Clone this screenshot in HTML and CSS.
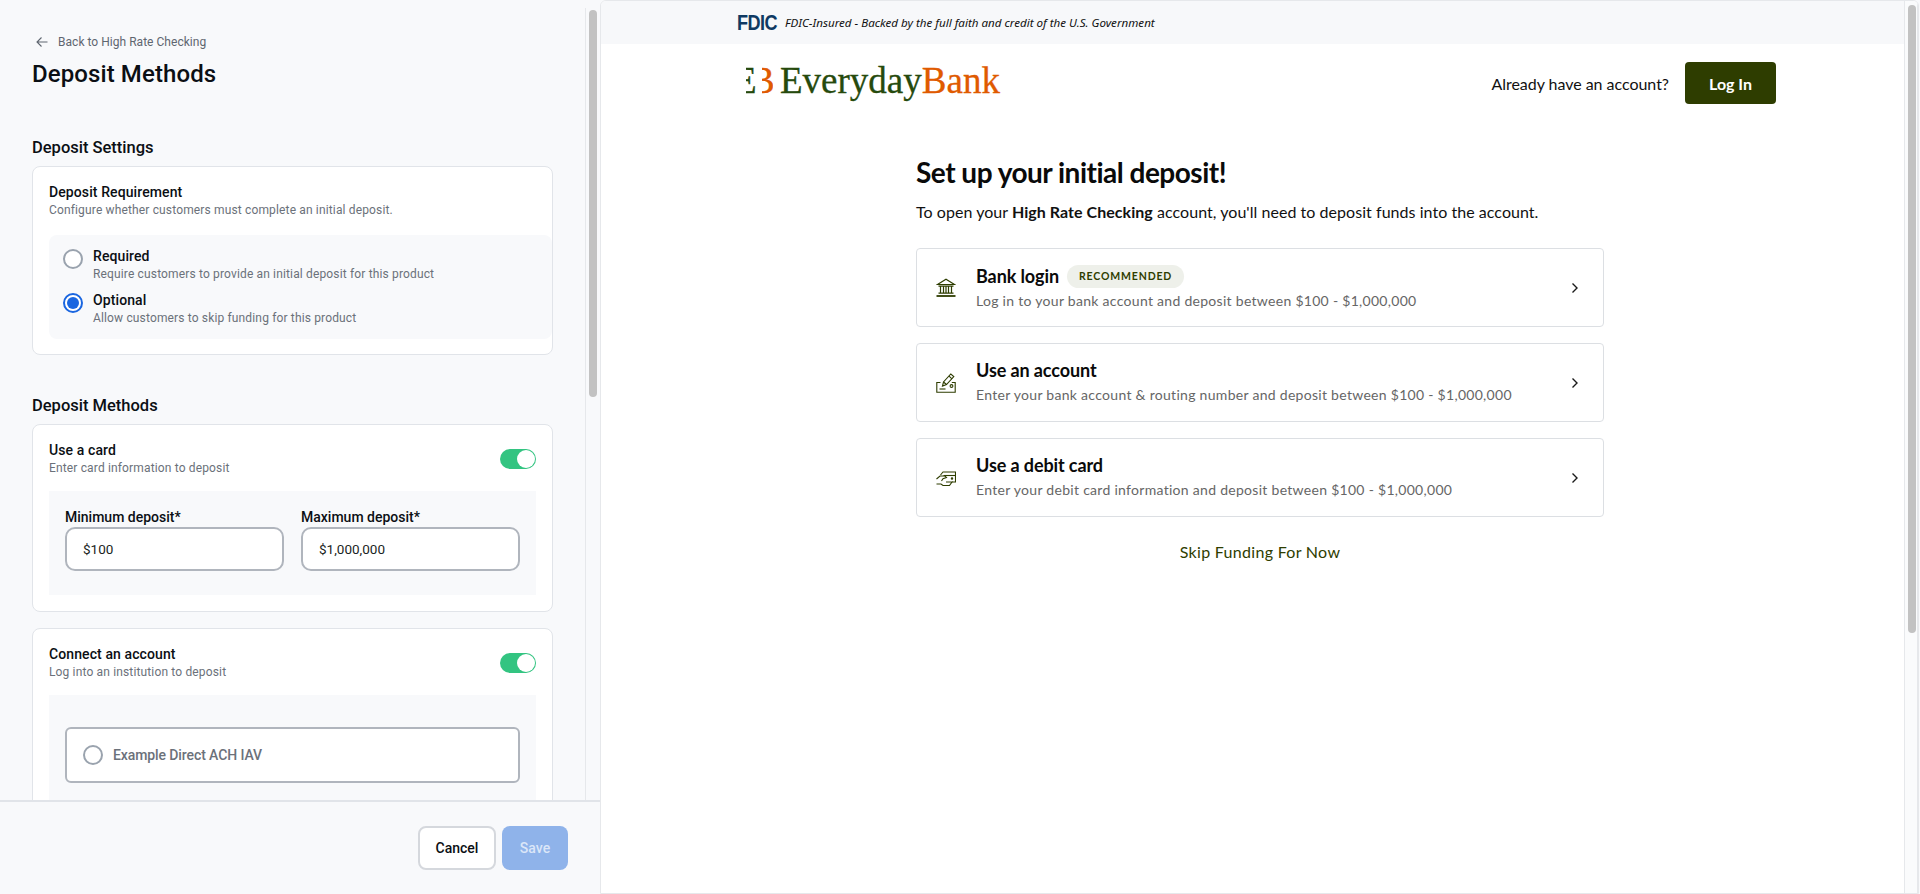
FILE: index.html
```html
<!DOCTYPE html>
<html>
<head>
<meta charset="utf-8">
<title>Deposit Methods</title>
<link rel="stylesheet" href="styles.css">
</head>

<body>
<div class="app">
    <!-- settings panel -->
    <aside class="panel">
        <div class="panel-scroll">
            <div class="panel-body">
                <a class="back-link">
                    <svg width="12" height="12" viewBox="0 0 12 12" fill="none" stroke="#5f6670" stroke-width="1.1"><path d="M11.5 6H1M5.5 1.5 1 6l4.5 4.5"/></svg>
                    Back to High Rate Checking
                </a>
                <h1 class="panel-title">Deposit Methods</h1>

                <h2 class="section-title section-first">Deposit Settings</h2>
                <section class="card card-req">
                    <div class="card-name">Deposit Requirement</div>
                    <div class="card-sub">Configure whether customers must complete an initial deposit.</div>
                    <div class="radio-box">
                        <div class="radio-row">
                            <span class="radio"></span>
                            <div>
                                <div class="card-name">Required</div>
                                <div class="card-sub">Require customers to provide an initial deposit for this product</div>
                            </div>
                        </div>
                        <div class="radio-row">
                            <span class="radio radio-on"></span>
                            <div>
                                <div class="card-name">Optional</div>
                                <div class="card-sub">Allow customers to skip funding for this product</div>
                            </div>
                        </div>
                    </div>
                </section>

                <h2 class="section-title section-second">Deposit Methods</h2>
                <section class="card">
                    <div class="card-head">
                        <div>
                            <div class="card-name">Use a card</div>
                            <div class="card-sub">Enter card information to deposit</div>
                        </div>
                        <span class="toggle"></span>
                    </div>
                    <div class="inset inset-fields">
                        <div class="field">
                            <label class="field-label">Minimum deposit*</label>
                            <div class="field-input">$100</div>
                        </div>
                        <div class="field">
                            <label class="field-label">Maximum deposit*</label>
                            <div class="field-input">$1,000,000</div>
                        </div>
                    </div>
                </section>

                <section class="card card-connect">
                    <div class="card-head">
                        <div>
                            <div class="card-name">Connect an account</div>
                            <div class="card-sub">Log into an institution to deposit</div>
                        </div>
                        <span class="toggle"></span>
                    </div>
                    <div class="inset inset-options">
                        <div class="option">
                            <span class="radio"></span>
                            Example Direct ACH IAV
                        </div>
                    </div>
                </section>
            </div>
            <div class="rail rail-left"><div class="thumb thumb-left"></div></div>
        </div>
        <div class="panel-foot">
            <button class="btn btn-cancel">Cancel</button>
            <button class="btn btn-save">Save</button>
        </div>
    </aside>

    <!-- product preview -->
    <main class="preview">
        <div class="preview-page">
            <div class="fdic-bar">
                <div class="wrap fdic-inner">
                    <span class="fdic-logo">FDIC</span>
                    <span class="fdic-text">FDIC-Insured - Backed by the full faith and credit of the U.S. Government</span>
                </div>
            </div>
            <header class="wrap site-head">
                <div class="logo">
                    <span class="logo-mark"><span class="logo-e"><span>E</span></span><span class="logo-b"><span>B</span></span></span>
                    <span class="logo-every">Everyday</span><span class="logo-bank">Bank</span>
                </div>
                <div class="head-right">
                    <span>Already have an account?</span>
                    <button class="btn-login">Log In</button>
                </div>
            </header>

            <div class="funding">
                <h2 class="funding-title">Set up your initial deposit!</h2>
                <p class="funding-sub">To open your <strong>High Rate Checking</strong> account, you'll need to deposit funds into the account.</p>

                <div class="method">
                    <svg class="method-icon" viewBox="0 0 20 20" fill="none" stroke="#2e3d00" stroke-width="1.2"><path d="M1.5 6.5 10 1.2l8.5 5.3Z"/><path d="M2.5 8.2h15M4.5 8.5v6.5M7.5 8.5v6.5M10 8.5v6.5M12.5 8.5v6.5M15.5 8.5v6.5M2.5 15.2h15"/><path d="M.5 18h19" stroke-width="1.8"/></svg>
                    <div class="method-text">
                        <div class="method-name">Bank login <span class="badge">RECOMMENDED</span></div>
                        <div class="method-sub">Log in to your bank account and deposit between $100 - $1,000,000</div>
                    </div>
                    <svg class="chevron" viewBox="0 0 8 12" fill="none" stroke="#1a1a1a" stroke-width="1.4"><path d="M1.5 1.5 6 6l-4.5 4.5"/></svg>
                </div>

                <div class="method">
                    <svg class="method-icon" viewBox="0 0 20 20" fill="none" stroke="#2e3d00" stroke-width="1.1"><path d="M4.5 9.5H.8v9.7h18.4V9.5h-3.4"/><path d="M6.5 13 7.5 9 14.8 1l3 2.6L10.5 11.5Z"/><path d="M13 3.2l3 2.6"/><path d="M7.5 9l3 2.5"/><circle cx="15.5" cy="13" r="1.4"/><path d="M3.5 16h6"/></svg>
                    <div class="method-text">
                        <div class="method-name">Use an account</div>
                        <div class="method-sub">Enter your bank account &amp; routing number and deposit between $100 - $1,000,000</div>
                    </div>
                    <svg class="chevron" viewBox="0 0 8 12" fill="none" stroke="#1a1a1a" stroke-width="1.4"><path d="M1.5 1.5 6 6l-4.5 4.5"/></svg>
                </div>

                <div class="method">
                    <svg class="method-icon" viewBox="0 0 20 20" fill="none" stroke="#2e3d00" stroke-width="1.1"><path d="M4.5 7 7 4h12.5v10H16"/><path d="M7.5 7.5h12"/><path d="M.5 11 4 8h5l1.5 1.5L7 10.8 5.5 13"/><path d="M.5 16H5l2 1.5h6.5L16 14h-6"/><circle cx="16" cy="10.5" r=".7"/></svg>
                    <div class="method-text">
                        <div class="method-name">Use a debit card</div>
                        <div class="method-sub">Enter your debit card information and deposit between $100 - $1,000,000</div>
                    </div>
                    <svg class="chevron" viewBox="0 0 8 12" fill="none" stroke="#1a1a1a" stroke-width="1.4"><path d="M1.5 1.5 6 6l-4.5 4.5"/></svg>
                </div>

                <a class="skip">Skip Funding For Now</a>
            </div>
        </div>
        <div class="rail rail-right"><div class="thumb thumb-right"></div></div>
    </main>
</div>
</body>
</html>
```

FILE: styles.css
```css
/* page */
html, body {
    margin: 0;
    height: 100%;
    overflow: hidden;
}

body {
    background: #f8f9fb;
    font-family: 'Roboto', 'Noto Sans', sans-serif;
    color: #0b0f14;
}

.app {
    display: flex;
    height: 894px;
}

/* left panel */
.panel {
    width: 600px;
    flex: none;
    display: flex;
    flex-direction: column;
}

.panel-scroll {
    flex: 1;
    min-height: 0;
    display: flex;
    overflow: hidden;
}

.panel-body {
    width: 585px;
    flex: none;
    box-sizing: border-box;
    padding: 34px 32px 0 32px;
}

.back-link {
    display: flex;
    align-items: center;
    gap: 10px;
    margin-left: 4px;
    height: 16px;
    font-size: 12px;
    letter-spacing: .03px;
    color: #5f6670;
}

.panel-title {
    margin: 8px 0 0;
    font-size: 24px;
    letter-spacing: .1px;
    line-height: 32px;
    font-weight: 500;
}

.section-title {
    margin: 0;
    font-size: 16.5px;
    line-height: 22px;
    font-weight: 500;
}

.section-first { margin-top: 47px; }
.section-second { margin-top: 40px; }

.card {
    margin-top: 7px;
    background: #fff;
    border: 1px solid #e1e4e9;
    border-radius: 8px;
    padding: 16px 16px 16px 16px;
    width: 521px;
    box-sizing: border-box;
    height: 188px;
}

.card-req {
    overflow: hidden;
    padding-right: 0;
    height: 189px;
}

.card-connect {
    margin-top: 16px;
    height: 260px;
}

.card-name {
    font-size: 14px;
    line-height: 18px;
    letter-spacing: .1px;
    font-weight: 500;
    color: #0b0f14;
}

.card-sub {
    font-size: 12px;
    line-height: 19px;
    letter-spacing: .15px;
    color: #6b717a;
}

.card-head {
    display: flex;
    justify-content: space-between;
    align-items: center;
}

/* radios */
.radio-box {
    margin-top: 15px;
    height: 104px;
    box-sizing: border-box;
    background: #f8f9fb;
    border-radius: 8px 8px 8px 8px;
    padding: 12px 14px;
    display: flex;
    flex-direction: column;
    gap: 7px;
}

.radio-row {
    display: flex;
    gap: 10px;
}

.radio {
    flex: none;
    width: 20px;
    height: 20px;
    box-sizing: border-box;
    border: 2px solid #9aa3ae;
    border-radius: 50%;
    background: #fff;
    margin-top: 2px;
}

.radio-on {
    border-color: #1a66e0;
    position: relative;
}

.radio-on::after {
    content: '';
    position: absolute;
    left: 2px;
    top: 2px;
    width: 12px;
    height: 12px;
    border-radius: 50%;
    background: #1a66e0;
}

.toggle {
    position: relative;
    width: 36px;
    height: 20px;
    margin-top: -2px;
    border-radius: 10px;
    background: #33c481;
}

.toggle::after {
    content: '';
    position: absolute;
    right: 1px;
    top: 1px;
    width: 18px;
    height: 18px;
    border-radius: 50%;
    background: #fff;
}

/* inner grey boxes */
.inset {
    margin-top: 13px;
    background: #f8f9fb;
}

.inset-fields {
    height: 104px;
    box-sizing: border-box;
    padding: 17px 16px 0;
    display: flex;
    gap: 17px;
}

.field {
    flex: 1;
}

.field-label {
    display: block;
    font-size: 14px;
    line-height: 18px;
    font-weight: 500;
    margin-bottom: 1px;
}

.field-input {
    height: 44px;
    box-sizing: border-box;
    border: 2px solid #b0b5bd;
    border-radius: 10px;
    background: #fff;
    padding: 0 16px;
    display: flex;
    align-items: center;
    font-size: 13.5px;
    color: #1b1f24;
}

.inset-options {
    height: 160px;
    box-sizing: border-box;
    padding: 32px 16px 0;
}

.option {
    height: 56px;
    box-sizing: border-box;
    border: 2px solid #b0b5bd;
    border-radius: 6px;
    background: #fff;
    display: flex;
    align-items: center;
    gap: 10px;
    padding-left: 16px;
    font-size: 14px;
    letter-spacing: -.1px;
    font-weight: 500;
    color: #6b717a;
}

.option .radio { margin-top: 0; }

/* scroll rails */
.rail {
    flex: none;
    box-sizing: border-box;
}

.thumb {
    width: 8px;
    border-radius: 4px;
    background: #c2c2c2;
}

.rail-left {
    width: 15px;
    margin-top: 8px;
    border-left: 1px solid #e6e8eb;
    padding: 2px 0 0 3px;
}

.thumb-left { height: 387px; }

.rail-right {
    width: 14px;
    border-left: 1px solid #e6e8eb;
    border-right: 1px solid #e6e8eb;
    padding: 4px 0 0 3px;
    background: #fafbfc;
}

.thumb-right { height: 628px; }

/* footer */
.panel-foot {
    height: 94px;
    flex: none;
    box-sizing: border-box;
    border-top: 2px solid #e1e4e9;
    display: flex;
    justify-content: flex-end;
    gap: 6px;
    padding: 24px 32px 0 0;
}

.btn {
    height: 44px;
    box-sizing: border-box;
    border-radius: 8px;
    font-family: inherit;
    font-size: 14px;
    font-weight: 500;
}

.btn-cancel {
    width: 78px;
    background: #fff;
    border: 2px solid #d5d8dd;
    color: #0b0f14;
}

.btn-save {
    width: 66px;
    background: #8fb3ea;
    border: none;
    color: #dbe6f8;
}

/* right preview */
.preview {
    flex: 1;
    min-width: 0;
    display: flex;
    background: #fff;
    border: 1px solid #e6e8eb;
    border-radius: 6px 6px 0 0;
    margin-right: 1px;
    overflow: hidden;
    font-family: 'Lato', sans-serif;
}

.preview-page {
    flex: 1;
    min-width: 0;
}

.wrap {
    width: 1039px;
    margin-left: 136px;
}

.fdic-bar {
    height: 43px;
    background: #f7f8fa;
}

.fdic-inner {
    display: flex;
    align-items: center;
    height: 100%;
    gap: 9px;
}

.fdic-logo {
    display: inline-block;
    width: 39px;
    font-family: 'Liberation Sans', sans-serif;
    font-size: 22px;
    font-weight: 700;
    letter-spacing: -.6px;
    color: #0f3a63;
    transform: scaleX(.82);
    transform-origin: left center;
}

.fdic-text {
    font-family: 'Noto Sans', sans-serif;
    font-style: italic;
    font-size: 11.6px;
    color: #111;
}

.site-head {
    height: 78px;
    display: flex;
    justify-content: space-between;
    align-items: center;
    box-sizing: border-box;
    padding: 0 0 0 9px;
}

.logo {
    display: flex;
    align-items: baseline;
    margin-bottom: 4px;
    font-family: 'Liberation Serif', serif;
    font-size: 37px;
    line-height: 44px;
    -webkit-text-stroke: .3px;
    color: #264a0d;
    white-space: nowrap;
}

.logo-mark {
    display: inline-flex;
    margin-right: 7px;
    gap: 5px;
    font-size: 37px;
}

/* the mark is two letters cut in half */
.logo-e,
.logo-b {
    display: inline-block;
    overflow: hidden;
    height: 44px;
    width: 11px;
}

.logo-e span,
.logo-b span {
    display: block;
    margin-left: -12px;
}

.logo-b { color: #e05a00; }
.logo-bank { color: #e05a00; }

.head-right {
    display: flex;
    align-items: center;
    gap: 16px;
    font-size: 16px;
    letter-spacing: -.03px;
    color: #111;
}

.btn-login {
    width: 91px;
    height: 42px;
    background: #2e3d00;
    border: none;
    border-radius: 4px;
    color: #fff;
    font-family: inherit;
    font-size: 16px;
    font-weight: 700;
}

/* deposit options */
.funding {
    width: 688px;
    margin: 32px 0 0 315px;
}

.funding-title {
    margin: 0;
    font-size: 28px;
    line-height: 36px;
    letter-spacing: -.5px;
    font-weight: 700;
    color: #0a0a0a;
}

.funding-sub {
    margin: 10px 0 0;
    font-size: 16px;
    line-height: 24px;
    letter-spacing: .045px;
    color: #111;
}

.method {
    height: 79px;
    box-sizing: border-box;
    margin-bottom: 16px;
    border: 1px solid #dcdfe3;
    border-radius: 4px;
    display: flex;
    align-items: center;
    padding: 0 24px 0 19px;
}

.funding-sub + .method { margin-top: 24px; }

.method-icon {
    width: 20px;
    height: 20px;
    flex: none;
}

.method-text {
    flex: 1;
    margin-left: 20px;
}

.method + .method .method-text { margin-top: -2px; }

.method-name {
    font-size: 18px;
    line-height: 24px;
    letter-spacing: -.1px;
    font-weight: 700;
    color: #0a0a0a;
    display: flex;
    align-items: center;
    gap: 8px;
}

.method-sub {
    margin-top: 3px;
    font-size: 14px;
    line-height: 20px;
    letter-spacing: .29px;
    color: #666;
}

.badge {
    height: 23px;
    padding: 0 12px;
    border-radius: 12px;
    background: #eef0ea;
    font-size: 10.5px;
    line-height: 23px;
    letter-spacing: .85px;
    font-weight: 700;
    color: #2e3d00;
}

.chevron {
    width: 8px;
    height: 12px;
    flex: none;
}

.skip {
    display: block;
    margin-top: 23px;
    text-align: center;
    font-size: 16px;
    line-height: 24px;
    letter-spacing: .3px;
    color: #2e3d00;
}
```
